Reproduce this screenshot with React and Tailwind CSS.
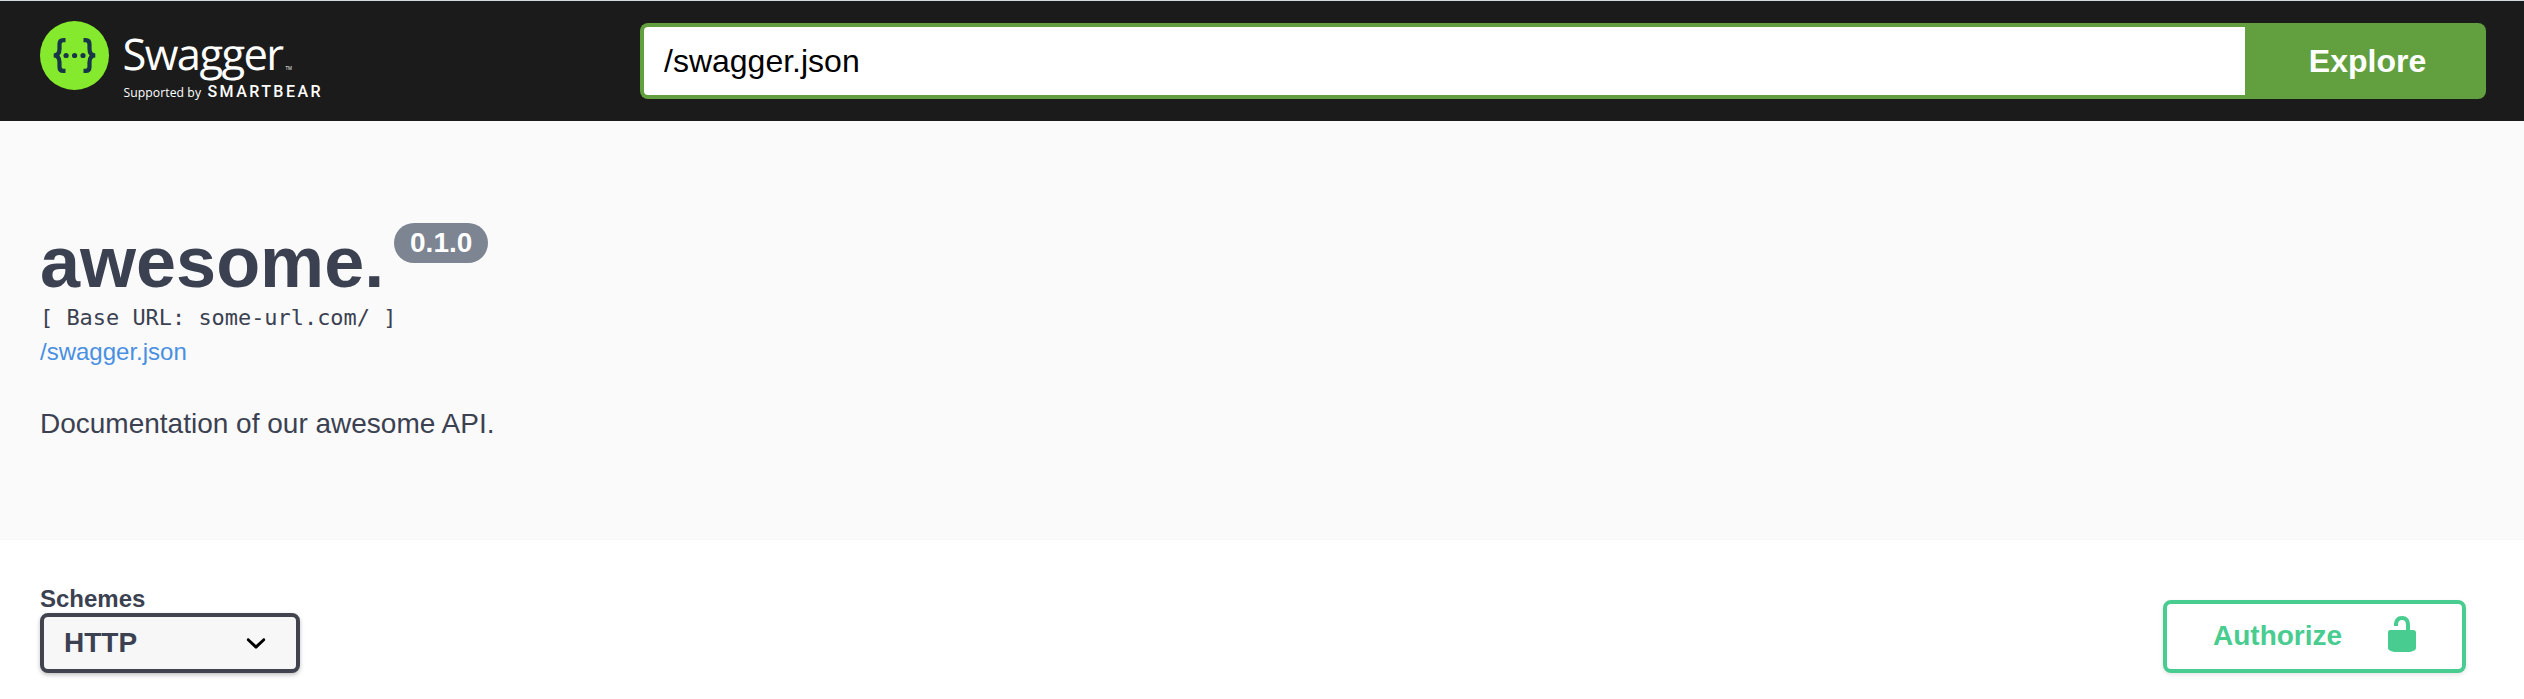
function Logo() {
  return (
    <svg className="block h-[86px] w-[290px] shrink-0" viewBox="0 0 290 86" role="img" aria-label="Swagger">
      <circle cx="34.5" cy="34.5" r="34.5" fill="#85ea2d" />
      <g fill="none" stroke="#173647" strokeWidth="4.2">
        <path d="M25.5 19.1h-2.2c-2.7 0-3.8 1.5-3.8 4.2v4.5c0 3.7-1.3 6.7-5.8 6.7 4.5 0 5.8 3 5.8 6.7v4.5c0 2.7 1.1 4.2 3.8 4.2h2.2" />
        <path d="M43.5 19.1h2.2c2.7 0 3.8 1.5 3.8 4.2v4.5c0 3.7 1.3 6.7 5.8 6.7-4.5 0-5.8 3-5.8 6.7v4.5c0 2.7-1.1 4.2-3.8 4.2h-2.2" />
      </g>
      <g fill="#173647">
        <circle cx="26.1" cy="34.5" r="2.6" />
        <circle cx="34.6" cy="34.5" r="2.6" />
        <circle cx="43" cy="34.5" r="2.6" />
      </g>
      <g fill="#fff" fontFamily="'Open Sans', 'Noto Sans', sans-serif">
        <text x="82.5" y="48.6" fontSize="43.5" letterSpacing="-1.6" textRendering="geometricPrecision">Swagger</text>
        <text x="245.5" y="48.6" fontSize="4.4" textLength="6.5">TM</text>
        <text x="83.5" y="76" fontSize="12.2" textLength="77.5">Supported by</text>
        <text x="167.5" y="76.3" fontSize="16" fontWeight="500" textLength="113" fontFamily="Roboto, sans-serif">SMARTBEAR</text>
      </g>
    </svg>
  );
}

function Topbar() {
  return (
    <header className="flex h-[121px] items-start border-t border-[#d3d9dc] bg-[#1b1b1b] pr-[38px] pl-10">
      <div className="w-[600px] shrink-0 pt-5">
        <Logo />
      </div>
      <form className="mt-[22px] flex h-[76px] flex-1">
        <input
          readOnly
          value="/swagger.json"
          className="min-w-0 flex-1 rounded-l-lg border-4 border-r-0 border-[#62a03f] bg-white px-5 text-[32px] text-black outline-none"
        />
        <button type="button" className="w-[241px] rounded-r-lg bg-[#62a03f] pl-1 text-[32px] font-bold text-white">
          Explore
        </button>
      </form>
    </header>
  );
}

function Info() {
  return (
    <section className="h-[419px] border-b border-[#f6f6f6] bg-[#fafafa] px-10 pt-[100px] text-[#3b4151]">
      <div className="flex h-[81px] items-start">
        <h2 className="pt-px text-[72px] leading-[81px] font-bold">awesome.</h2>
        <span className="mt-0.5 ml-[10px] flex h-10 w-[94px] items-center justify-center rounded-full bg-[#7d8492] text-[28px] font-bold text-white">
          0.1.0
        </span>
      </div>
      <pre className="mt-[1px] font-['DejaVu_Sans_Mono',monospace] text-[21.93px] leading-[30px]">[ Base URL: some-url.com/ ]</pre>
      <a className="mt-[3px] block text-2xl leading-[32px] text-[#4990e2]">/swagger.json</a>
      <p className="mt-[38px] text-[28px] leading-[36px]">Documentation of our awesome API.</p>
    </section>
  );
}

function SchemeBar() {
  return (
    <section className="flex h-[159px] items-start justify-between bg-white pt-11 pr-[58px] pl-10 text-[#3b4151]">
      <div>
        <label className="block h-[29px] pt-px text-2xl leading-[28px] font-bold">Schemes</label>
        <div className="flex h-[60px] w-[260px] items-center justify-between rounded-lg border-4 border-[#41444e] bg-[#f7f7f7] pr-[20px] pl-5 text-[28px] font-bold shadow-[0_2px_4px_rgba(0,0,0,0.25)]">
          <span className="leading-[52px]">HTTP</span>
          <svg className="size-10" viewBox="0 0 20 20">
            <path d="M13.418 7.859c.271-.268.709-.268.978 0 .27.268.272.701 0 .969l-3.908 3.83c-.27.268-.707.268-.979 0l-3.908-3.83c-.27-.267-.27-.701 0-.969.271-.268.709-.268.978 0L10 11l3.418-3.141z" />
          </svg>
        </div>
      </div>
      <button
        type="button"
        className="mt-4 flex h-[73px] w-[303px] items-center rounded-lg border-4 border-[#49cc90] bg-white pl-[46px] text-[28px] font-bold text-[#49cc90] shadow-[0_2px_4px_rgba(0,0,0,0.1)]"
      >
        <span className="w-[169px] pb-0.5 text-left">Authorize</span>
        <svg className="mb-[5px] size-10" viewBox="0 0 20 20" fill="#49cc90">
          <path d="M15.8 8H14V5.6C14 2.703 12.665 1 10 1 7.334 1 6 2.703 6 5.6V6h2v-.801C8 3.754 8.797 3 10 3c1.203 0 2 .754 2 2.199V8H4c-.553 0-1 .646-1 1.199V17c0 .549.428 1.139.951 1.307l1.197.387C5.672 18.861 6.55 19 7.1 19h5.8c.549 0 1.428-.139 1.951-.307l1.196-.387c.524-.167.953-.757.953-1.306V9.199C17 8.646 16.352 8 15.8 8z" />
        </svg>
      </button>
    </section>
  );
}

export default function App() {
  return (
    <main className="h-[699px] overflow-hidden bg-white font-['Liberation_Sans',Arial,sans-serif]">
      <Topbar />
      <Info />
      <SchemeBar />
    </main>
  );
}
